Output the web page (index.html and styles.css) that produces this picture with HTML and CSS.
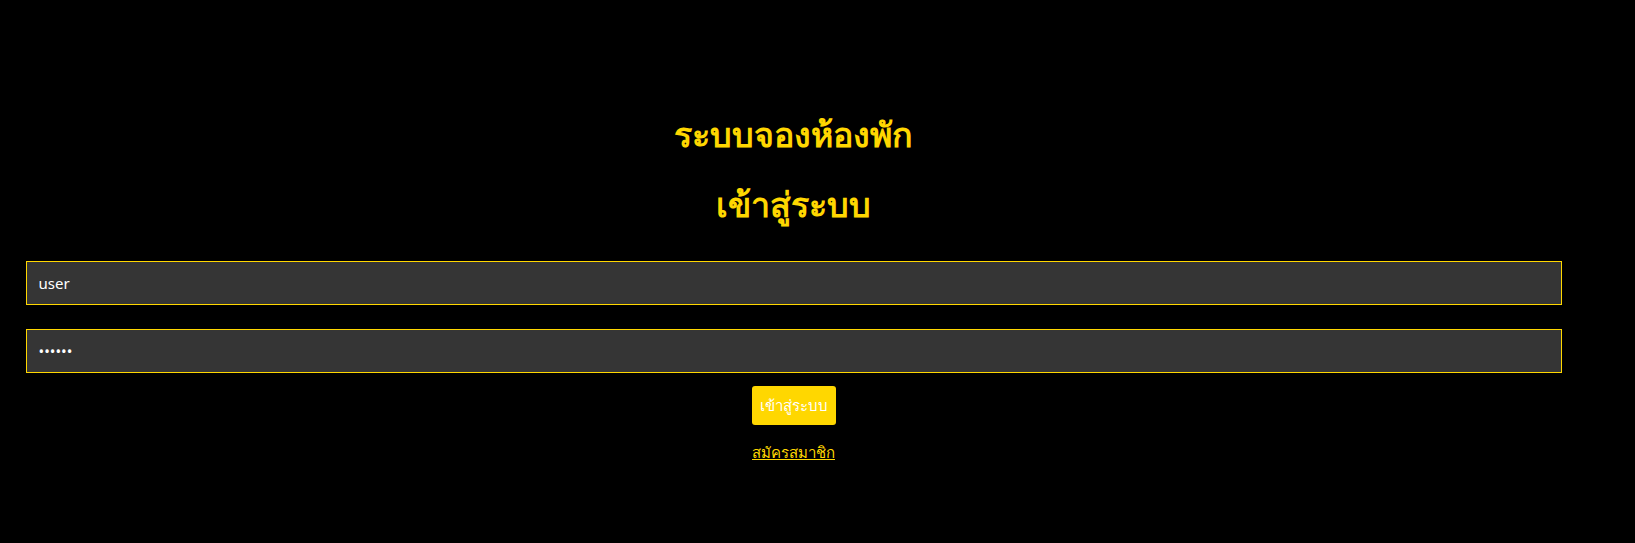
FILE: index.html
```html
<!DOCTYPE html>
<html lang="th">
<head>
<meta charset="utf-8">
<title>ระบบจองห้องพัก</title>
<link rel="stylesheet" href="styles.css">
</head>
<body>
<div class="container">
  <h2 class="title">ระบบจองห้องพัก</h2>
  <h2 class="subtitle">เข้าสู่ระบบ</h2>
  <form class="login-form">
    <input class="field" type="text" value="user">
    <input class="field" type="password" value="123456">
    <button class="btn" type="button">เข้าสู่ระบบ</button>
    <a class="register" href="#">สมัครสมาชิก</a>
  </form>
</div>
</body>
</html>
```
FILE: styles.css
```css
html, body {
  margin: 0;
  padding: 0;
  background: #000;
}
body {
  font-family: Tahoma, "Noto Sans", "DejaVu Sans", sans-serif;
  color: #fff;
}
.container {
  margin-left: 26px;
  width: 1535px;
  padding-top: 114px;
  text-align: center;
}
.title, .subtitle {
  margin: 0;
  color: #FFD700;
  font-size: 34px;
  font-weight: bold;
  line-height: 40px;
}
.subtitle {
  margin-top: 30px;
}
.login-form {
  display: flex;
  flex-direction: column;
  align-items: center;
  margin-top: 37px;
}
.field {
  box-sizing: border-box;
  width: 1536px;
  height: 44px;
  margin: 0 0 24px 0;
  padding: 0 12px;
  background: #353535;
  border: 1px solid #FFD700;
  color: #fff;
  font-family: inherit;
  font-size: 15px;
  outline: none;
}
.field:last-of-type {
  margin-bottom: 13px;
}
.btn {
  width: 84px;
  height: 39px;
  padding: 0;
  background: #FFD700;
  border: none;
  border-radius: 3px;
  color: #fff;
  font-family: inherit;
  font-size: 15px;
  font-weight: 500;
}
.register {
  margin-top: 16px;
  color: #FFD700;
  font-size: 15px;
  text-decoration: underline;
}
```
